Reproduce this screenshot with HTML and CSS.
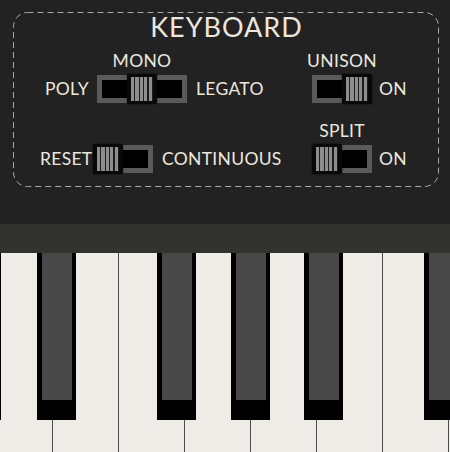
FILE: index.html
```html
<!DOCTYPE html>
<html>
<head>
<meta charset="utf-8">
<link rel="stylesheet" href="styles.css">
</head>
<body>
<div class="top">
  <div class="panel">
    <svg class="frame" width="426" height="175" viewBox="0 0 426 175"><rect x="0.5" y="0.5" width="425" height="174" rx="14" ry="14" fill="none" stroke="#a9a9a6" stroke-width="1" stroke-dasharray="6 4"/></svg>
    <div class="title">KEYBOARD</div>
    <div class="row row1">
      <div class="group g-mono">
        <span class="lbl side pre">POLY</span>
        <div class="swcol w90">
          <div class="lbl toplbl">MONO</div>
          <div class="sw w90 mid"><i class="knob"></i></div>
        </div>
        <span class="lbl side post">LEGATO</span>
      </div>
      <div class="group g-unison">
        <div class="swcol w60">
          <div class="lbl toplbl">UNISON</div>
          <div class="sw w60 right"><i class="knob"></i></div>
        </div>
        <span class="lbl side on">ON</span>
      </div>
    </div>
    <div class="row row2">
      <div class="group g-reset">
        <span class="lbl side pre">RESET</span>
        <div class="swcol w60">
          <div class="sw w60 left"><i class="knob"></i></div>
        </div>
        <span class="lbl side post">CONTINUOUS</span>
      </div>
      <div class="group g-split">
        <div class="swcol w60">
          <div class="lbl toplbl">SPLIT</div>
          <div class="sw w60 left"><i class="knob"></i></div>
        </div>
        <span class="lbl side on">ON</span>
      </div>
    </div>
  </div>
</div>
<div class="bar"></div>
<div class="keys">
  <div class="whites">
    <div class="wk"></div><div class="wk"></div><div class="wk"></div><div class="wk"></div>
    <div class="wk"></div><div class="wk"></div><div class="wk"></div><div class="wk"></div>
  </div>
  <div class="bk" style="left:-38px"></div>
  <div class="bk" style="left:37px"></div>
  <div class="bk" style="left:157px"></div>
  <div class="bk" style="left:231px"></div>
  <div class="bk" style="left:304px"></div>
  <div class="bk" style="left:424px"></div>
</div>
</body>
</html>
```
FILE: styles.css
```css
html, body {
  margin: 0;
  padding: 0;
}
body {
  width: 450px;
  height: 452px;
  overflow: hidden;
  background: #222222;
  font-family: Lato, "Open Sans", sans-serif;
  color: #ebe7de;
}
.top {
  height: 224px;
  box-sizing: border-box;
  padding-top: 12px;
}
.panel {
  position: relative;
  margin-left: 13px;
  width: 426px;
  height: 175px;
  box-sizing: border-box;
  display: flex;
  flex-direction: column;
}
.frame {
  position: absolute;
  left: 0;
  top: 0;
}
.title {
  position: relative;
  text-align: center;
  font-size: 27px;
  line-height: 27px;
  margin-top: 1px;
  letter-spacing: 1px;
  padding-left: 1px;
}
.row {
  position: relative;
  display: flex;
  align-items: flex-end;
}
.row1 {
  margin-top: 11px;
}
.row2 {
  margin-top: 18px;
}
.group {
  display: flex;
  align-items: flex-end;
}
.g-mono { margin-left: 32px; width: 267px; }
.g-reset { margin-left: 27px; width: 272px; }
.g-mono .pre { width: 42px; margin-right: 10px; }
.g-mono .post { margin-left: 9px; }
.g-reset .pre { width: 46px; margin-right: 7px; }
.g-reset .post { margin-left: 9px; }
.pre { text-align: right; }
.on { margin-left: 7px; }
.swcol {
  display: flex;
  flex-direction: column;
  align-items: center;
  flex: none;
}
.lbl {
  font-size: 17.5px;
  letter-spacing: 0.3px;
  white-space: nowrap;
}
.toplbl {
  line-height: 20px;
  margin-bottom: 4px;
}
.side {
  line-height: 28px;
  height: 28px;
  flex: none;
}
.sw {
  height: 28px;
  box-sizing: border-box;
  border: 5px solid #5a5a5a;
  background: #000;
  display: flex;
  align-items: center;
}
.w90 { width: 90px; }
.w60 { width: 60px; }
.knob {
  display: block;
  width: 30px;
  height: 30px;
  box-sizing: border-box;
  padding: 3px 4px 3px 4px;
  border-radius: 2px;
  margin-top: -6px;
  margin-bottom: -6px;
  background: repeating-linear-gradient(to right, #8d8d8d 0 3px, #1c1c1c 3px 4.5px) content-box, #080808;
  box-shadow: 0 0 2px rgba(0,0,0,0.8);
}
.mid .knob { margin-left: auto; margin-right: auto; }
.left .knob { margin-left: -5px; }
.right .knob { margin-left: auto; margin-right: -5px; }
.bar {
  height: 29px;
  background: #32322f;
}
.keys {
  position: relative;
  height: 199px;
  overflow: hidden;
  background: #efebe6;
}
.whites {
  display: flex;
  margin-left: -13px;
  height: 100%;
}
.wk {
  flex: none;
  width: 66px;
  height: 100%;
  box-sizing: border-box;
  border-right: 1px solid #4d4d4b;
  background: #efebe6;
}
.bk {
  position: absolute;
  top: 0;
  width: 39px;
  height: 167px;
  box-sizing: border-box;
  border-left: 5px solid #000;
  border-right: 4px solid #000;
  border-bottom: 20px solid #000;
  background: #484848;
}
```
